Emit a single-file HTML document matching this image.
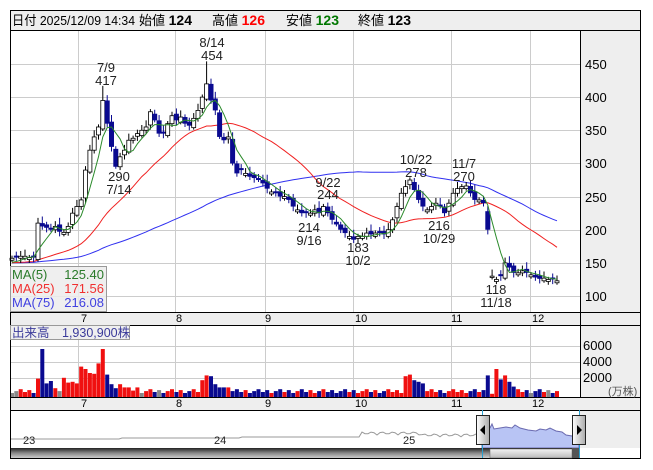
<!DOCTYPE html>
<html><head><meta charset="utf-8">
<style>
html,body{margin:0;padding:0;background:#fff;width:653px;height:470px;overflow:hidden}
svg{display:block;font-family:"Liberation Sans","Noto Sans CJK JP",sans-serif}
</style></head><body>
<svg id="s" width="653" height="470" viewBox="0 0 653 470" xmlns="http://www.w3.org/2000/svg">
<defs>
<linearGradient id="sb" x1="0" y1="0" x2="0" y2="1"><stop offset="0" stop-color="#222"/><stop offset="0.5" stop-color="#888"/><stop offset="1" stop-color="#ccc"/></linearGradient>
<linearGradient id="th" x1="0" y1="0" x2="0" y2="1"><stop offset="0" stop-color="#f4f4f4"/><stop offset="1" stop-color="#bbb"/></linearGradient>
<linearGradient id="hd" x1="0" y1="0" x2="1" y2="0"><stop offset="0" stop-color="#fff"/><stop offset="1" stop-color="#aaa"/></linearGradient>
</defs>
<rect x="10" y="10" width="630" height="449" fill="#fff"/>
<rect x="10" y="10" width="630" height="20" fill="#eee"/>
<text x="12" y="25" font-size="13" fill="#000" textLength="123" lengthAdjust="spacingAndGlyphs">日付 2025/12/09 14:34</text>
<text x="139" y="25" font-size="13" fill="#000">始値 <tspan font-weight="bold" font-size="14">124</tspan></text>
<text x="212" y="25" font-size="13" fill="#000">高値 <tspan font-weight="bold" font-size="14" fill="#f00">126</tspan></text>
<text x="286" y="25" font-size="13" fill="#000">安値 <tspan font-weight="bold" font-size="14" fill="#070">123</tspan></text>
<text x="358" y="25" font-size="13" fill="#000">終値 <tspan font-weight="bold" font-size="14">123</tspan></text>
<rect x="580" y="30" width="60" height="282" fill="#eee"/>
<rect x="580" y="325" width="60" height="72" fill="#eee"/>
<rect x="580" y="410" width="60" height="38" fill="#eee"/>
<rect x="10" y="312" width="630" height="13" fill="#eee"/>
<rect x="10" y="397" width="630" height="13" fill="#eee"/>
<g id="grid" stroke="#ccc" stroke-width="1"></g>
<g id="plot"></g>
<g stroke="#000" fill="none" stroke-width="1">
<line x1="10" y1="30.5" x2="640" y2="30.5"/>
<line x1="10" y1="312.5" x2="640" y2="312.5"/>
<line x1="10" y1="325.5" x2="640" y2="325.5"/>
<line x1="10" y1="397.5" x2="640" y2="397.5"/>
<line x1="10" y1="410.5" x2="640" y2="410.5"/>
<line x1="580.5" y1="30" x2="580.5" y2="397"/>
<rect x="10.5" y="10.5" width="630" height="448"/>
</g>
<g font-size="13" fill="#000">
<text x="585" y="69">450</text><text x="585" y="102">400</text><text x="585" y="135">350</text><text x="585" y="168">300</text><text x="585" y="202">250</text><text x="585" y="235">200</text><text x="585" y="268">150</text><text x="585" y="301">100</text>
<text x="583" y="350">6000</text><text x="583" y="366">4000</text><text x="583" y="382">2000</text>
<text x="608" y="395" font-size="11" fill="#555">(万株)</text>
</g>
<g font-size="11" fill="#000">
<text x="81" y="322">7</text><text x="176" y="322">8</text><text x="265" y="322">9</text><text x="355" y="322">10</text><text x="451" y="322">11</text><text x="532" y="322">12</text>
<text x="81" y="407">7</text><text x="176" y="407">8</text><text x="265" y="407">9</text><text x="355" y="407">10</text><text x="451" y="407">11</text><text x="532" y="407">12</text>
</g>
<g font-size="13" fill="#222" text-anchor="middle">
<text x="106" y="72">7/9</text><text x="106" y="85">417</text>
<text x="212" y="47">8/14</text><text x="212" y="60">454</text>
<text x="119" y="181">290</text><text x="119" y="194">7/14</text>
<text x="309" y="232">214</text><text x="309" y="245">9/16</text>
<text x="328" y="187">9/22</text><text x="328" y="199">244</text>
<text x="358" y="252">183</text><text x="358" y="265">10/2</text>
<text x="416" y="164">10/22</text><text x="416" y="177">278</text>
<text x="464" y="168">11/7</text><text x="464" y="181">270</text>
<text x="439" y="230">216</text><text x="439" y="243">10/29</text>
<text x="496" y="294">118</text><text x="496" y="307">11/18</text>
</g>
<rect x="10.5" y="266.5" width="96" height="45" fill="#ececec" fill-opacity="0.85" stroke="#999"/>
<g font-size="13">
<text x="12" y="279" fill="#2a7a2a">MA(5)</text><text x="104" y="279" fill="#2a7a2a" text-anchor="end">125.40</text>
<text x="12" y="293" fill="#f03030">MA(25)</text><text x="104" y="293" fill="#f03030" text-anchor="end">171.56</text>
<text x="12" y="307" fill="#4040e0">MA(75)</text><text x="104" y="307" fill="#4040e0" text-anchor="end">216.08</text>
</g>
<rect x="10.5" y="325.5" width="119" height="14" fill="#ececec" fill-opacity="0.85" stroke="#999"/>
<text x="12" y="337" font-size="12.5" fill="#3a3a9a">出来高　1,930,900株</text>
<g id="nav"></g>
<g font-size="11" fill="#222"><text x="23" y="444">23</text><text x="214" y="444">24</text><text x="403" y="444">25</text></g>
<rect x="11" y="448" width="569" height="10" fill="url(#sb)"/>
<rect x="490" y="449" width="82" height="9" fill="url(#th)" stroke="#666" stroke-width="0.5"/>
<rect x="572" y="448" width="8" height="10" fill="#555"/>
<line x1="482.5" y1="410" x2="482.5" y2="458" stroke="#29a0d0"/>
<line x1="579.5" y1="410" x2="579.5" y2="458" stroke="#29a0d0"/>
<rect x="476.5" y="415.5" width="13" height="29" fill="url(#hd)" stroke="#222"/>
<path d="M485 425 L480 430 L485 435Z" fill="#000"/>
<rect x="572.5" y="415.5" width="13" height="29" fill="url(#hd)" stroke="#222"/>
<path d="M577 425 L582 430 L577 435Z" fill="#000"/>
</svg>
<script>
var NS="http://www.w3.org/2000/svg";
function el(p,t,a){var e=document.createElementNS(NS,t);for(var k in a)e.setAttribute(k,a[k]);p.appendChild(e);return e;}
var grid=document.getElementById('grid'),plot=document.getElementById('plot'),nav=document.getElementById('nav');
[78,175,265,353,451,530].forEach(function(x){el(grid,'line',{x1:x+.5,y1:30,x2:x+.5,y2:312});el(grid,'line',{x1:x+.5,y1:325,x2:x+.5,y2:397});});
[64,97,130,163,197,230,263,296].forEach(function(y){el(grid,'line',{x1:10,y1:y+.5,x2:580,y2:y+.5});});
[346,362,378].forEach(function(y){el(grid,'line',{x1:10,y1:y+.5,x2:580,y2:y+.5});});
var C=[157,158,160,160,158,158,210,205,203,200,205,197,196,205,225,235,245,290,320,340,355,395,360,325,295,310,320,335,338,345,350,355,378,365,345,345,360,372,365,370,360,357,368,380,400,420,395,380,340,335,340,300,285,290,285,280,278,275,270,262,257,255,250,250,245,235,230,225,225,225,230,225,235,225,215,208,200,195,190,185,190,190,195,193,195,195,193,200,215,235,255,265,275,260,245,235,230,235,240,235,225,240,255,262,265,266,255,245,245,240,200,130,125,130,150,143,135,135,138,135,132,128,126,127,125,125,123];
var n=C.length,x0=12,dx=(557-12)/(n-1);
function Y(p){return 64+(450-p)*0.663;}
var hist=[];for(var i=0;i<75;i++)hist.push(150+Math.sin(i)*3);
var all=hist.concat(C);
function ma(k,i){var s=0;for(var j=0;j<k;j++)s+=all[75+i-j];return s/k;}
function line(k,col){var d='';for(var i=0;i<n;i++){d+=(i?'L':'M')+(x0+i*dx).toFixed(1)+' '+Y(ma(k,i)).toFixed(1);}el(plot,'path',{d:d,fill:'none',stroke:col,'stroke-width':1});}
line(75,'#3030f0');line(25,'#f02020');
var O=[];
for(var i=0;i<n;i++){
 var c=C[i],o=i?C[i-1]+((i%3)-1)*3:157; if(Math.abs(c-o)<3)o=c+((i%2)?3:-3);
 if(i==110)o=228; if(i==111)o=128; if(i==112)o=122;
 O.push(o);
 var x=x0+i*dx,hi=Math.max(o,c)+4+(i%4)*2,lo=Math.min(o,c)-3-(i%3)*2;
 if(i==21)hi=417;if(i==45)hi=454;if(i==112)lo=118;
 el(plot,'line',{x1:x.toFixed(1),y1:Y(hi),x2:x.toFixed(1),y2:Y(lo),stroke:c>=o?'#000':'#0a0a90'});
 var t=Y(Math.max(o,c)),b=Y(Math.min(o,c));
 if(c>=o)el(plot,'rect',{x:(x-2).toFixed(1),y:t,width:4,height:Math.max(1,b-t),fill:'#fff',stroke:'#000','stroke-width':0.8});
 else el(plot,'rect',{x:(x-2.5).toFixed(1),y:t,width:5,height:Math.max(1,b-t),fill:'#0a0a90'});
}
line(5,'#2a8a2a');
var VO={6:2300,7:6000,8:1700,9:2000,10:1100,12:2400,13:1800,14:1900,15:1700,16:3800,17:3500,18:3000,19:2900,20:4200,21:6000,22:2800,23:1600,24:1100,25:1600,26:1200,27:1200,28:800,29:1200,44:2100,45:2700,46:2600,47:1600,48:1200,49:1200,50:1200,91:2600,92:2800,93:2100,94:1900,95:1700,110:2700,111:400,112:3500,113:2200,114:2700,115:1900,116:1300};
for(var i=0;i<n;i++){
 var v=VO[i]||(500+((i*37)%5)*120);
 var x=x0+i*dx,h=v*16/2000,col=C[i]>O[i]?'#f01010':'#0a0a90';
 if(i<2||i==11||i==30||i==34||i==120||i==124)col='#888';
 el(plot,'rect',{x:(x-2).toFixed(1),y:(397-h).toFixed(1),width:4,height:h.toFixed(1),fill:col});
}
var d='M11 439';
for(var x=11;x<=482;x+=3){var y=439-(x>120?1:0)-(x>240?1:0)-(x>360?Math.abs(Math.sin(x*0.3))*3:0)-(x>360&&x<420?2:0);d+='L'+x+' '+y.toFixed(1);}
el(nav,'path',{d:d,fill:'none',stroke:'#999','stroke-width':1});
var pd='M482 448L482 433',pts=[[486,432],[490,428],[492,424],[494,429],[500,428],[506,427],[512,428],[515,425],[520,428],[528,430],[536,431],[540,429],[546,430],[550,428],[556,431],[562,432],[566,435],[572,436],[579,437]];
pts.forEach(function(p){pd+='L'+p[0]+' '+p[1];});pd+='L579 448Z';
el(nav,'path',{d:pd,fill:'#b8c4f4',stroke:'#6a6ab0','stroke-width':1});
</script>
</body></html>
